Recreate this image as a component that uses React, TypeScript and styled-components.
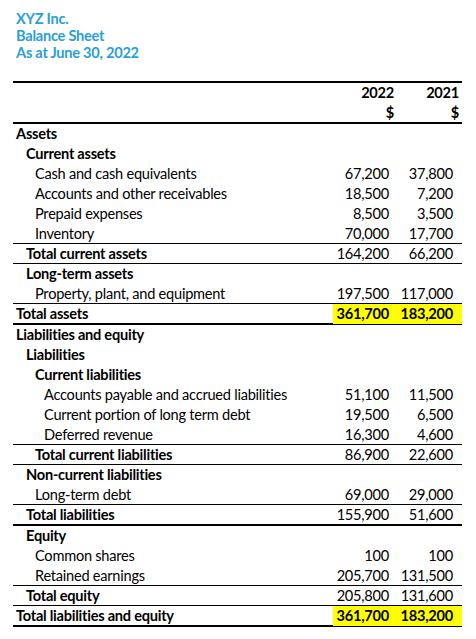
import React from "react";
import styled, {createGlobalStyle} from "styled-components";

type Rule = "none" | "thin" | "thick";

interface Line {
  label: string;
  level: number;
  bold?: boolean;
  a?: string;
  b?: string;
  rule?: Rule;
  hl?: boolean;
}

const rows: Line[] = [
  {label: "Assets", level: 0, bold: true},
  {label: "Current assets", level: 1, bold: true},
  {label: "Cash and cash equivalents", level: 2, a: "67,200", b: "37,800"},
  {label: "Accounts and other receivables", level: 2, a: "18,500", b: "7,200"},
  {label: "Prepaid expenses", level: 2, a: "8,500", b: "3,500"},
  {label: "Inventory", level: 2, a: "70,000", b: "17,700", rule: "thin"},
  {label: "Total current assets", level: 1, bold: true, a: "164,200", b: "66,200", rule: "thin"},
  {label: "Long-term assets", level: 1, bold: true},
  {label: "Property, plant, and equipment", level: 2, a: "197,500", b: "117,000", rule: "thin"},
  {label: "Total assets", level: 0, bold: true, a: "361,700", b: "183,200", rule: "thick", hl: true},
  {label: "Liabilities and equity", level: 0, bold: true},
  {label: "Liabilities", level: 1, bold: true},
  {label: "Current liabilities", level: 2, bold: true},
  {label: "Accounts payable and accrued liabilities", level: 3, a: "51,100", b: "11,500"},
  {label: "Current portion of long term debt", level: 3, a: "19,500", b: "6,500"},
  {label: "Deferred revenue", level: 3, a: "16,300", b: "4,600", rule: "thin"},
  {label: "Total current liabilities", level: 2, bold: true, a: "86,900", b: "22,600", rule: "thin"},
  {label: "Non-current liabilities", level: 1, bold: true},
  {label: "Long-term debt", level: 2, a: "69,000", b: "29,000", rule: "thin"},
  {label: "Total liabilities", level: 1, bold: true, a: "155,900", b: "51,600", rule: "thick"},
  {label: "Equity", level: 1, bold: true},
  {label: "Common shares", level: 2, a: "100", b: "100"},
  {label: "Retained earnings", level: 2, a: "205,700", b: "131,500", rule: "thin"},
  {label: "Total equity", level: 1, bold: true, a: "205,800", b: "131,600", rule: "thin"},
  {label: "Total liabilities and equity", level: 0, bold: true, a: "361,700", b: "183,200", rule: "thick", hl: true},
];

export default function App() {
  return (
    <>
      <GlobalStyle />
      <Sheet>
        <TitleBlock>
          <TitleLine>XYZ Inc.</TitleLine>
          <TitleLine>Balance Sheet</TitleLine>
          <TitleLine>As at June 30, 2022</TitleLine>
        </TitleBlock>
        <Spacer />
        <Header>
          <HeadRow>
            <span />
            <HeadCell>2022</HeadCell>
            <HeadCell>2021</HeadCell>
          </HeadRow>
          <HeadRow>
            <span />
            <HeadCell>$</HeadCell>
            <HeadCell>$</HeadCell>
          </HeadRow>
        </Header>
        {rows.map((r) => (
          <Row key={r.label} $rule={r.rule || "none"}>
            <Label $level={r.level} $bold={!!r.bold}>{r.label}</Label>
            <Num $hl={!!r.hl} $pad={8}>{r.a}</Num>
            <Num $hl={!!r.hl} $pad={9}>{r.b}</Num>
          </Row>
        ))}
      </Sheet>
    </>
  );
}

const GlobalStyle = createGlobalStyle`
  body {
    margin: 0;
    background: #fff;
    font-family: Lato, "Open Sans", sans-serif;
    font-size: 14.6px;
    letter-spacing: -0.25px;
    color: #000;
  }
`;

const Sheet = styled.div`
  width: 449px;
  margin-left: 13px;
  padding-top: 10px;
`;

const TitleBlock = styled.div`
  padding-left: 3px;
`;

const TitleLine = styled.div`
  height: 17px;
  line-height: 17px;
  font-weight: bold;
  color: #2a9fd8;
`;

const Spacer = styled.div`
  height: 20px;
`;

const Header = styled.div`
  border-top: 2px solid #000;
  border-bottom: 2px solid #000;
  font-weight: bold;
`;

const HeadRow = styled.div`
  display: grid;
  grid-template-columns: 320px 64px 65px;
  height: 19.5px;
  line-height: 19.5px;
`;

const HeadCell = styled.div`
  text-align: right;
  padding-right: 3px;
`;

const Row = styled.div<{$rule: Rule}>`
  display: grid;
  grid-template-columns: 320px 64px 65px;
  box-sizing: border-box;
  height: ${(p) => (p.$rule === "thick" ? 21 : 20)}px;
  line-height: 20px;
  border-bottom: ${(p) =>
    p.$rule === "thick" ? "2px solid #000" : p.$rule === "thin" ? "1px solid #000" : "none"};
`;

const Label = styled.div<{$level: number; $bold: boolean}>`
  padding-left: ${(p) => 3 + (p.$level ? 1 + p.$level * 9 : 0)}px;
  white-space: nowrap;
  font-weight: ${(p) => (p.$bold ? "bold" : "normal")};
`;

const Num = styled.div<{$hl: boolean; $pad: number}>`
  text-align: right;
  padding-right: ${(p) => p.$pad}px;
  font-weight: ${(p) => (p.$hl ? "bold" : "normal")};
  background: ${(p) => (p.$hl ? "#ffff00" : "transparent")};
`;
